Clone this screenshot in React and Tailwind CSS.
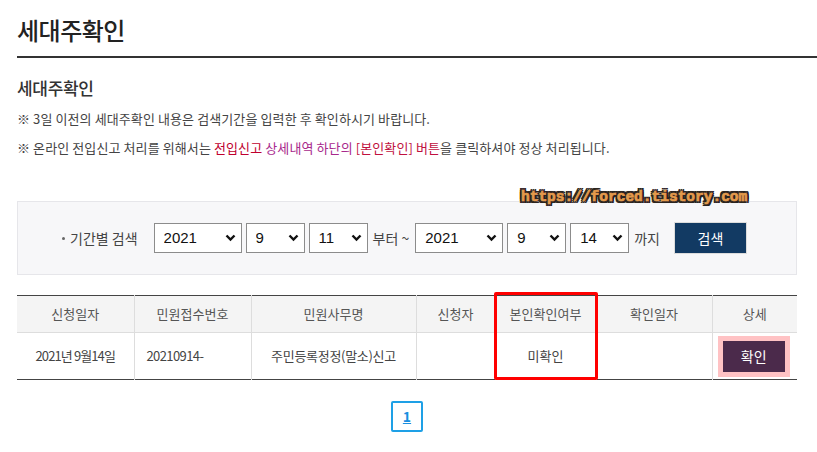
import React from 'react';

const Chevron = () => (
  <svg className="pointer-events-none absolute right-[6px] top-1/2 -translate-y-1/2" width="11" height="8" viewBox="0 0 11 8">
    <path d="M1.5 1.5 L5.5 5.5 L9.5 1.5" fill="none" stroke="#111" strokeWidth="2.4" />
  </svg>
);

const Select = ({ value, options, width }) => (
  <div className={`relative ${width}`}>
    <select
      defaultValue={value}
      className="h-[30px] w-full appearance-none border border-[#8c8c8c] bg-white pl-[9px] text-[15px] text-[#111] outline-none"
      style={{ fontFamily: 'Arial, "Liberation Sans", sans-serif' }}
    >
      {options.map((o) => (
        <option key={o}>{o}</option>
      ))}
    </select>
    <Chevron />
  </div>
);

const years = ['2019', '2020', '2021'];
const months = Array.from({ length: 12 }, (_, i) => String(i + 1));
const days = Array.from({ length: 31 }, (_, i) => String(i + 1));

const cols = [
  { label: '신청일자', w: 'w-[117px]' },
  { label: '민원접수번호', w: 'w-[117px]' },
  { label: '민원사무명', w: 'w-[165px]' },
  { label: '신청자', w: 'w-[79px]' },
  { label: '본인확인여부', w: 'w-[101px]' },
  { label: '확인일자', w: 'w-[116px]' },
  { label: '상세', w: 'w-[85px]' },
];

export default function App() {
  return (
    <div
      className="relative min-h-[452px] w-[817px] overflow-hidden bg-white text-[#333]"
      style={{ fontFamily: '"Noto Sans CJK KR", "Noto Sans", sans-serif' }}
    >
      {/* Page title */}
      <div className="pl-[17px] pt-[12px]">
        <h1 className="text-[24px] font-medium leading-[36px] tracking-[-0.5px] text-[#222]">세대주확인</h1>
        <div className="mt-[8px] h-[2px] w-full bg-[#333]" />
      </div>

      <div className="w-[797px] pl-[17px]">
        <h2 className="mt-[18px] text-[17px] font-medium leading-[24px] tracking-[-0.3px] text-[#333]">세대주확인</h2>
        <p className="mt-[9px] text-[13px] leading-[20px] tracking-[0.1px] text-[#444]">
          ※ 3일 이전의 세대주확인 내용은 검색기간을 입력한 후 확인하시기 바랍니다.
        </p>
        <p className="mt-[9px] text-[13px] leading-[20px] tracking-[0.1px] text-[#444]">
          ※ 온라인 전입신고 처리를 위해서는 <span className="text-[#c0002e]">전입신고</span>{' '}
          <span className="text-[#a8288c]">상세내역 하단의</span>{' '}
          <span className="text-[#c0103e]">[본인확인] 버튼</span>을 클릭하셔야 정상 처리됩니다.
        </p>

        {/* Search box */}
        <div className="mt-[43px] flex h-[74px] w-[780px] items-center border border-[#e6e6ea] bg-[#f7f7f9] pl-[44px]">
          <span className="flex items-center text-[14px] text-[#444]">
            <span className="mr-[5px] inline-block h-[3px] w-[3px] rounded-full bg-[#666]" />
            기간별 검색
          </span>
          <div className="ml-[16px] flex items-center gap-[4px]">
            <Select value="2021" options={years} width="w-[88px]" />
            <Select value="9" options={months} width="w-[59px]" />
            <Select value="11" options={days} width="w-[59px]" />
            <span className="ml-[1px] mr-[2px] text-[14px] text-[#444]">부터 ~</span>
            <Select value="2021" options={years} width="w-[88px]" />
            <Select value="9" options={months} width="w-[59px]" />
            <Select value="14" options={days} width="w-[59px]" />
            <span className="ml-[1px] text-[14px] text-[#444]">까지</span>
            <button className="ml-[10px] h-[32px] w-[73px] border border-[#dcdcdc] bg-[#123a63] text-[14px] text-white">
              검색
            </button>
          </div>
        </div>

        {/* Result table */}
        <div className="relative mt-[20px] w-[780px]">
          <table className="w-full border-collapse text-[13px] text-[#444]">
            <thead>
              <tr className="h-[37px] border-t border-[#444] bg-[#f4f4f4]">
                {cols.map((c, i) => (
                  <th
                    key={c.label}
                    className={`${c.w} border-b border-[#ddd] font-normal text-[#555] ${i > 0 ? 'border-l' : ''}`}
                  >
                    {c.label}
                  </th>
                ))}
              </tr>
            </thead>
            <tbody>
              <tr className="h-[47px] border-b border-[#444]">
                <td className="text-center tracking-[-0.9px]">2021년 9월14일</td>
                <td className="border-l border-[#ddd] pl-[12px] tracking-[-0.6px]">20210914-</td>
                <td className="border-l border-[#ddd] text-center tracking-[-0.3px]">주민등록정정(말소)신고</td>
                <td className="border-l border-[#ddd]" />
                <td className="border-l border-[#ddd] text-center">미확인</td>
                <td className="border-l border-[#ddd]" />
                <td className="border-l border-[#ddd]">
                  <div className="flex justify-center">
                    <div className="ml-[-2px] bg-[#ffc2c4] p-[5px]">
                      <button className="h-[31px] w-[62px] bg-[#4b2a4b] text-[14px] text-white">확인</button>
                    </div>
                  </div>
                </td>
              </tr>
            </tbody>
          </table>
          {/* Red highlight box */}
          <div className="pointer-events-none absolute left-[477px] top-[-3px] h-[88px] w-[104px] rounded-[2px] border-[3px] border-[#ff0000]" />
        </div>

        {/* Pagination */}
        <div className="mt-[21px] flex w-[780px] justify-center">
          <a className="flex h-[31px] w-[32px] items-center justify-center rounded-[2px] border-2 border-[#1ea0e6] text-[14px] font-bold text-[#1a8fe0] underline">
            1
          </a>
        </div>
      </div>

      {/* Watermark */}
      <div
        className="pointer-events-none absolute left-[521px] top-[187px] text-[14.5px] font-bold text-[#e39a4c]"
        style={{
          fontFamily: '"Liberation Mono", monospace',
          WebkitTextStroke: '0.7px #e39a4c',
          textShadow:
            '2px 0 0 #2a2420, -2px 0 0 #2a2420, 0 2px 0 #2a2420, 0 -2px 0 #2a2420, 2px 2px 0 #2a2420, -2px -2px 0 #2a2420, 2px -2px 0 #2a2420, -2px 2px 0 #2a2420, 0 0 3px #666',
        }}
      >
        https://forced.tistory.com
      </div>
    </div>
  );
}
